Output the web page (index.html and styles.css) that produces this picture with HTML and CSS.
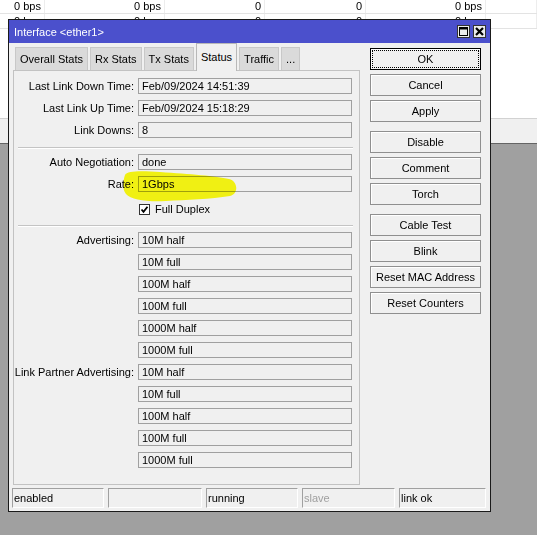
FILE: index.html
```html
<!DOCTYPE html>
<html lang="en">
<head>
    <meta charset="UTF-8">
    <meta name="viewport" content="width=device-width, initial-scale=1.0">
    <title>Interface &lt;ether1&gt;</title>
    <link rel="stylesheet" href="styles.css">
</head>
<body>

    <!-- background: interface list behind the dialog -->
    <div class="app">
        <div class="trow first">
            <div class="tcell">0 bps</div>
            <div class="tcell">0 bps</div>
            <div class="tcell">0</div>
            <div class="tcell">0</div>
            <div class="tcell">0 bps</div>
            <div class="tcell"></div>
        </div>
        <div class="trow">
            <div class="tcell">0 bps</div>
            <div class="tcell">0 bps</div>
            <div class="tcell">0</div>
            <div class="tcell">0</div>
            <div class="tcell">0 bps</div>
            <div class="tcell"></div>
        </div>
        <div class="blank"></div>
        <div class="band"></div>
        <div class="desk"></div>
    </div>

    <div class="window">
        <div class="titlebar">
            <span class="title">Interface &lt;ether1&gt;</span>
            <div class="winbtns">
                <span class="winbtn">
                    <svg width="11" height="11" viewBox="0 0 11 11"><rect x="1.5" y="1.5" width="8" height="8" fill="none" stroke="#000" stroke-width="1"/><line x1="1" y1="2.5" x2="10" y2="2.5" stroke="#000" stroke-width="2"/></svg>
                </span>
                <span class="winbtn">
                    <svg width="11" height="11" viewBox="0 0 11 11"><path d="M2 2 L9 9 M9 2 L2 9" stroke="#000" stroke-width="2.2"/></svg>
                </span>
            </div>
        </div>

        <div class="main">
            <div class="left">
                <div class="tabs">
                    <div class="tab">Overall Stats</div>
                    <div class="tab">Rx Stats</div>
                    <div class="tab">Tx Stats</div>
                    <div class="tab active">Status</div>
                    <div class="tab">Traffic</div>
                    <div class="tab">...</div>
                </div>
                <div class="panel">
                    <div class="group">
                        <div class="row"><span class="lbl">Last Link Down Time:</span><span class="field">Feb/09/2024 14:51:39</span></div>
                        <div class="row"><span class="lbl">Last Link Up Time:</span><span class="field">Feb/09/2024 15:18:29</span></div>
                        <div class="row"><span class="lbl">Link Downs:</span><span class="field">8</span></div>
                    </div>
                    <div class="sep"></div>
                    <div class="group">
                        <div class="row"><span class="lbl">Auto Negotiation:</span><span class="field">done</span></div>
                        <div class="row"><span class="lbl">Rate:</span><span class="field">1Gbps</span></div>
                        <div class="row check-row">
                            <span class="lbl"></span>
                            <span class="check">
                                <span class="box"><svg width="9" height="9" viewBox="0 0 9 9"><path d="M1.5 4.5 L3.5 6.8 L7.5 1.8" fill="none" stroke="#000" stroke-width="1.8"/></svg></span>
                                Full Duplex
                            </span>
                        </div>
                    </div>
                    <div class="sep sep2"></div>
                    <div class="group">
                        <div class="row"><span class="lbl">Advertising:</span><span class="field">10M half</span></div>
                        <div class="row"><span class="lbl"></span><span class="field">10M full</span></div>
                        <div class="row"><span class="lbl"></span><span class="field">100M half</span></div>
                        <div class="row"><span class="lbl"></span><span class="field">100M full</span></div>
                        <div class="row"><span class="lbl"></span><span class="field">1000M half</span></div>
                        <div class="row"><span class="lbl"></span><span class="field">1000M full</span></div>
                        <div class="row"><span class="lbl">Link Partner Advertising:</span><span class="field">10M half</span></div>
                        <div class="row"><span class="lbl"></span><span class="field">10M full</span></div>
                        <div class="row"><span class="lbl"></span><span class="field">100M half</span></div>
                        <div class="row"><span class="lbl"></span><span class="field">100M full</span></div>
                        <div class="row"><span class="lbl"></span><span class="field">1000M full</span></div>
                    </div>
                </div>
            </div>

            <div class="buttons">
                <button class="btn default">OK</button>
                <button class="btn">Cancel</button>
                <button class="btn">Apply</button>
                <button class="btn gap">Disable</button>
                <button class="btn">Comment</button>
                <button class="btn">Torch</button>
                <button class="btn gap">Cable Test</button>
                <button class="btn">Blink</button>
                <button class="btn">Reset MAC Address</button>
                <button class="btn">Reset Counters</button>
            </div>
        </div>

        <div class="statusbar">
            <div class="cell">enabled</div>
            <div class="cell"></div>
            <div class="cell">running</div>
            <div class="cell muted">slave</div>
            <div class="cell">link ok</div>
        </div>

        <!-- yellow marker stroke drawn over the Rate field -->
        <svg class="marker" viewBox="8 19 483 493" width="483" height="493">
            <path d="M125,175 C127,170 145,171 160,172 C190,174 216,176 229,179 C238,181 239,194 230,196 C211,199 186,200 166,201 C148,202 131,200 126,194 C122,189 123,181 125,175 Z" fill="#ffff14"/>
        </svg>
    </div>

</body>
</html>
```

FILE: styles.css
```css
* {
    box-sizing: border-box;
}

body {
    margin: 0;
    font-family: "Liberation Sans", Arial, sans-serif;
    font-size: 11px;
    color: #000;
}

/* background list */
.app {
    height: 100vh;
    display: flex;
    flex-direction: column;
    background: #fff;
    overflow: hidden;
}

.trow {
    display: grid;
    grid-template-columns: 45px 120px 100px 101px 120px 1fr;
    height: 15px;
    border-bottom: 1px solid #e3e3e3;
    flex-shrink: 0;
}

.trow.first {
    margin-top: -1px;
}

.tcell {
    text-align: right;
    padding-right: 3px;
    line-height: 14px;
    border-right: 1px solid #ededed;
    white-space: nowrap;
}

.blank {
    height: 90px;
    flex-shrink: 0;
    border-bottom: 1px solid #d2d2d2;
}

.band {
    height: 25px;
    flex-shrink: 0;
    background: #f0f0f0;
    border-bottom: 1px solid #646464;
}

.desk {
    flex: 1;
    background: #a0a0a0;
}

/* dialog window */
.window {
    position: absolute;
    left: 8px;
    top: 19px;
    width: 483px;
    height: 493px;
    border: 1px solid #1a1a1a;
    background: #f0f0f0;
    display: flex;
    flex-direction: column;
}

.titlebar {
    height: 23px;
    background: #4b50cc;
    color: #fff;
    display: flex;
    align-items: center;
    justify-content: space-between;
    padding: 0 4px 0 5px;
}

.title {
    font-size: 11px;
}

.winbtns {
    display: flex;
    gap: 3px;
}

.winbtn {
    width: 13px;
    height: 13px;
    background: #ececec;
    border: 1px solid #333;
    display: flex;
    align-items: center;
    justify-content: center;
}

.main {
    height: 442px;
    display: flex;
    padding-left: 4px;
}

.left {
    width: 347px;
    display: flex;
    flex-direction: column;
}

.tabs {
    height: 27px;
    display: flex;
    align-items: flex-end;
    padding-left: 2px;
}

.tab {
    height: 23px;
    line-height: 22px;
    padding: 0 4px;
    margin-right: 2px;
    background: #dadada;
    border: 1px solid #c8c8c8;
    border-bottom: none;
    white-space: nowrap;
}

.tab.active {
    height: 28px;
    padding-top: 2px;
    margin-bottom: -1px;
    background: #f0f0f0;
    border-color: #b8b8b8;
    position: relative;
    z-index: 1;
}

.panel {
    height: 415px;
    border: 1px solid #c2c2c2;
    padding-top: 7px;
}

.group {
    display: flex;
    flex-direction: column;
    gap: 6px;
}

.row {
    display: grid;
    grid-template-columns: 120px 214px;
    column-gap: 4px;
    height: 16px;
    align-items: center;
}

.lbl {
    text-align: right;
    white-space: nowrap;
}

.field {
    height: 16px;
    line-height: 14px;
    border: 1px solid #a0a0a0;
    padding-left: 3px;
    white-space: nowrap;
}

.check-row {
    margin-top: 3px;
}

.check {
    display: flex;
    align-items: center;
    gap: 5px;
    padding-left: 1px;
}

.box {
    width: 11px;
    height: 11px;
    border: 1px solid #333;
    background: #fff;
    display: flex;
    align-items: center;
    justify-content: center;
}

.sep {
    margin: 9px 6px 5px 4px;
    border-top: 1px solid #c4c4c4;
    border-bottom: 1px solid #fff;
}

.sep2 {
    margin-top: 8px;
}

/* right side buttons */
.buttons {
    width: 111px;
    margin-left: 10px;
    padding-top: 5px;
    display: flex;
    flex-direction: column;
    gap: 4px;
}

.btn {
    height: 22px;
    padding: 0;
    font-family: inherit;
    font-size: 11px;
    color: #000;
    background: #f0f0f0;
    border: 1px solid #8f8f8f;
    box-shadow: inset 1px 1px 0 #fff;
    position: relative;
}

.btn.gap {
    margin-top: 5px;
}

.btn.default {
    border-color: #000;
}

.btn.default::after {
    content: "";
    position: absolute;
    inset: 1px;
    border: 1px dotted #000;
}

/* status bar */
.statusbar {
    height: 26px;
    display: grid;
    grid-template-columns: 92px 94px 92px 93px 1fr;
    gap: 4px;
    padding: 3px 4px 3px 3px;
}

.cell {
    border: 1px solid;
    border-color: #a0a0a0 #fff #fff #a0a0a0;
    padding-left: 1px;
    line-height: 18px;
    white-space: nowrap;
}

.cell.muted {
    color: #a0a0a0;
}

.marker {
    position: absolute;
    left: -1px;
    top: -1px;
    pointer-events: none;
    mix-blend-mode: multiply;
}
```
